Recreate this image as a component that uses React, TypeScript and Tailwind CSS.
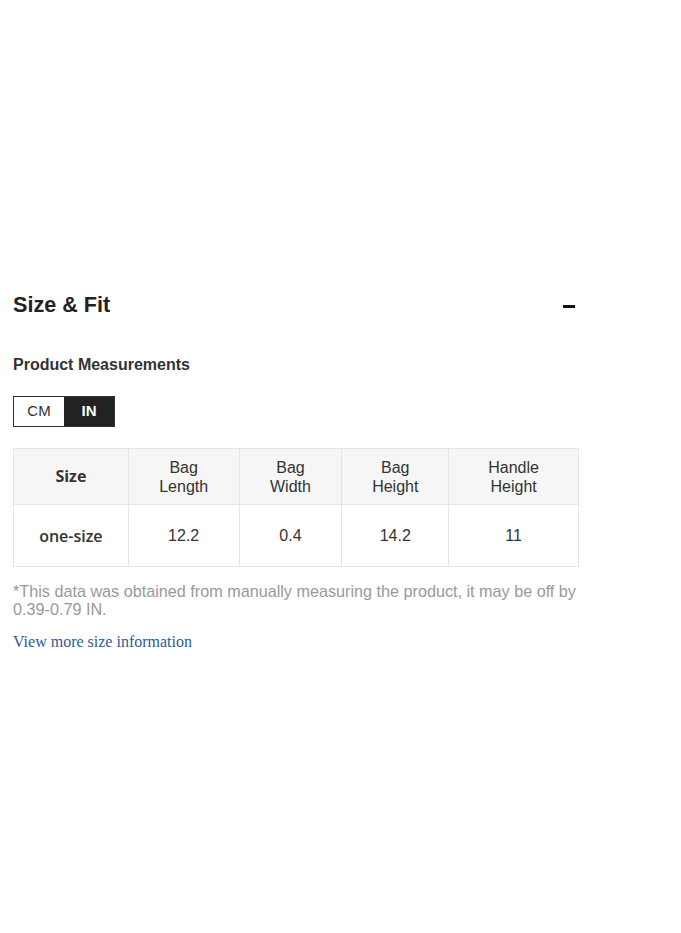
import React from "react";

const cols = [
  { w: "w-[115px]", head: ["Size"], val: "one-size", first: true },
  { w: "w-[111px]", head: ["Bag", "Length"], val: "12.2" },
  { w: "w-[103px]", head: ["Bag", "Width"], val: "0.4" },
  { w: "w-[107px]", head: ["Bag", "Height"], val: "14.2" },
  { w: "w-[130px]", head: ["Handle", "Height"], val: "11" },
];

export default function App() {
  return (
    <div className="min-h-[933px] w-[681px] bg-white" style={{ fontFamily: '"Liberation Sans", Arial, sans-serif' }}>
      <div className="pl-[13px] pt-[290px] w-[579px]">
        <div className="flex h-[30px] items-center justify-between">
          <h2 className="text-[21.6px] font-bold text-[#222] leading-[30px]">Size &amp; Fit</h2>
          <div className="mr-[4px] mt-[2px] h-[3px] w-[12px] bg-[#111]" />
        </div>
        <div className="mt-[35px] text-[16px] font-bold leading-[20px] text-[#333]">Product Measurements</div>
        <div className="mt-[21px] flex h-[31px] w-[102px] border border-[#333] text-[15px]">
          <div className="flex w-[50px] items-center justify-center bg-white text-[#333]">CM</div>
          <div className="flex flex-1 items-center justify-center bg-[#222] font-bold text-white">IN</div>
        </div>
        <table className="mt-[21px] border-collapse text-[16px] text-[#333]">
          <thead>
            <tr className="h-[56px] bg-[#f6f6f6]">
              {cols.map((c, i) => (
                <th
                  key={i}
                  className={`${c.w} border border-[#e5e5e5] p-0 text-center align-middle leading-[19px] ${c.first ? "font-bold" : "font-normal"}`}
                  style={c.first ? { fontFamily: '"Open Sans", sans-serif' } : undefined}
                >
                  {c.head.map((h, j) => (
                    <div key={j}>{h}</div>
                  ))}
                </th>
              ))}
            </tr>
          </thead>
          <tbody>
            <tr className="h-[62px] bg-white">
              {cols.map((c, i) => (
                <td
                  key={i}
                  className={`${c.w} border border-[#e5e5e5] p-0 text-center align-middle`}
                  style={c.first ? { fontFamily: '"Open Sans", sans-serif', fontWeight: 600 } : undefined}
                >
                  {c.val}
                </td>
              ))}
            </tr>
          </tbody>
        </table>
        <p className="mt-[15px] text-[16.2px] leading-[18px] text-[#999]">
          *This data was obtained from manually measuring the product, it may be off by 0.39-0.79 IN.
        </p>
        <a
          href="#"
          className="mt-[15px] block text-[16px] leading-[18px] text-[#2b5b9b]"
          style={{ fontFamily: '"Liberation Serif", "Times New Roman", serif' }}
        >
          View more size information
        </a>
      </div>
    </div>
  );
}
